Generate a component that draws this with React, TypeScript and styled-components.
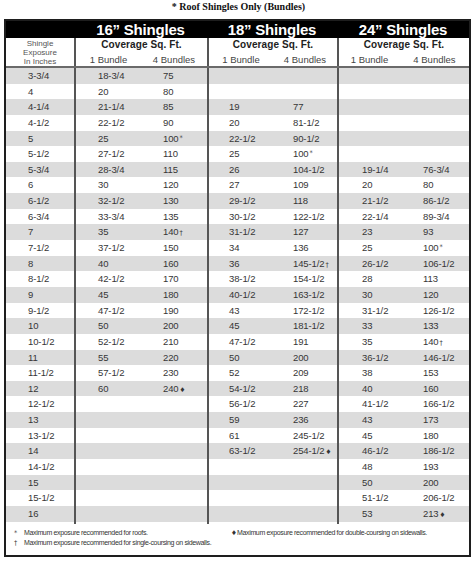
import styled, { createGlobalStyle } from "styled-components";

const GlobalStyle = createGlobalStyle`
  body {
    margin: 0;
    background: #fff;
    font-family: "Liberation Sans", Arial, sans-serif;
  }
`;

type Pair = [string, string];

const EXPOSURES = [
  "3-3/4", "4", "4-1/4", "4-1/2", "5", "5-1/2", "5-3/4", "6", "6-1/2", "6-3/4",
  "7", "7-1/2", "8", "8-1/2", "9", "9-1/2", "10", "10-1/2", "11", "11-1/2",
  "12", "12-1/2", "13", "13-1/2", "14", "14-1/2", "15", "15-1/2", "16",
];

// each group: index of first exposure row it covers, then its bundle figures
const GROUPS: { title: string; start: number; first: string; pad: number; rows: Pair[] }[] = [
  {
    title: "16” Shingles",
    start: 0,
    first: "65px",
    pad: 22,
    rows: [
      ["18-3/4", "75"], ["20", "80"], ["21-1/4", "85"], ["22-1/2", "90"], ["25", "100*"],
      ["27-1/2", "110"], ["28-3/4", "115"], ["30", "120"], ["32-1/2", "130"], ["33-3/4", "135"],
      ["35", "140†"], ["37-1/2", "150"], ["40", "160"], ["42-1/2", "170"], ["45", "180"],
      ["47-1/2", "190"], ["50", "200"], ["52-1/2", "210"], ["55", "220"], ["57-1/2", "230"],
      ["60", "240♦"],
    ],
  },
  {
    title: "18” Shingles",
    start: 2,
    first: "64px",
    pad: 20,
    rows: [
      ["19", "77"], ["20", "81-1/2"], ["22-1/2", "90-1/2"], ["25", "100*"], ["26", "104-1/2"],
      ["27", "109"], ["29-1/2", "118"], ["30-1/2", "122-1/2"], ["31-1/2", "127"], ["34", "136"],
      ["36", "145-1/2†"], ["38-1/2", "154-1/2"], ["40-1/2", "163-1/2"], ["43", "172-1/2"],
      ["45", "181-1/2"], ["47-1/2", "191"], ["50", "200"], ["52", "209"], ["54-1/2", "218"],
      ["56-1/2", "227"], ["59", "236"], ["61", "245-1/2"], ["63-1/2", "254-1/2♦"],
    ],
  },
  {
    title: "24” Shingles",
    start: 6,
    first: "61px",
    pad: 23,
    rows: [
      ["19-1/4", "76-3/4"], ["20", "80"], ["21-1/2", "86-1/2"], ["22-1/4", "89-3/4"], ["23", "93"],
      ["25", "100*"], ["26-1/2", "106-1/2"], ["28", "113"], ["30", "120"], ["31-1/2", "126-1/2"],
      ["33", "133"], ["35", "140†"], ["36-1/2", "146-1/2"], ["38", "153"], ["40", "160"],
      ["41-1/2", "166-1/2"], ["43", "173"], ["45", "180"], ["46-1/2", "186-1/2"], ["48", "193"],
      ["50", "200"], ["51-1/2", "206-1/2"], ["53", "213♦"],
    ],
  },
];

const Page = styled.div`
  width: 474px;
  height: 564px;
`;

const Title = styled.h1`
  margin: 0;
  height: 19px;
  padding-left: 3px;
  font: bold 10px/14px "Liberation Serif", "Times New Roman", serif;
  text-align: center;
  color: #111;
`;

const Chart = styled.div`
  margin-left: 4px;
  width: 467px;
  box-sizing: border-box;
  border: 2px solid #1e1e1e;
`;

const RowGrid = styled.div`
  display: grid;
  grid-template-columns: 68px 133px 130px 132px;
`;

const HeaderBar = styled(RowGrid)`
  height: 17px;
  background: #000;
  color: #fff;
`;

const GroupTitle = styled.div`
  font: bold 15px/17px "Liberation Sans", Arial, sans-serif;
  letter-spacing: -0.2px;
  text-align: center;
`;

const SubHeader = styled(RowGrid)`
  height: 28px;
  border-bottom: 2px solid #6a6a6a;
`;

const ExposureHead = styled.div`
  padding-top: 1px;
  font-size: 8px;
  line-height: 9px;
  text-align: center;
  color: #555;
`;

const Group = styled.div<{ $first: string }>`
  display: grid;
  grid-template-columns: ${({ $first }) => $first} 1fr;
  border-left: 2px solid #555;
`;

const Coverage = styled.div`
  grid-column: 1 / -1;
  padding-top: 1px;
  font: bold 10px/12px "Liberation Sans", Arial, sans-serif;
  letter-spacing: 0.1px;
  text-align: center;
  color: #222;
`;

const BundleHead = styled.div`
  margin-top: 1px;
  font-size: 9.5px;
  line-height: 13px;
  text-align: center;
  color: #444;
`;

const Row = styled(RowGrid)<{ $shade: boolean }>`
  height: 15.655px;
  background: ${({ $shade }) => ($shade ? "#dcdcdc" : "#fff")};
`;

const Cell = styled.div<{ $pad: number }>`
  padding-left: ${({ $pad }) => $pad}px;
  font-size: 9.5px;
  line-height: 15.655px;
  letter-spacing: -0.1px;
  color: #363636;
  white-space: nowrap;
`;

const Mark = styled.span<{ $raise: boolean }>`
  margin-left: 1px;
  font-family: "DejaVu Sans", sans-serif;
  font-size: 6.5px;
  color: #363636;
  vertical-align: ${({ $raise }) => ($raise ? "2px" : "0")};
`;

const Footer = styled.div`
  display: grid;
  grid-template-columns: 222px 1fr;
  height: 33px;
  box-sizing: border-box;
  padding-top: 6px;
`;

const Notes = styled.div<{ $indent: number }>`
  padding-left: ${({ $indent }) => $indent}px;
`;

const Note = styled.div`
  display: flex;
  font-size: 7px;
  line-height: 10px;
  letter-spacing: -0.35px;
  color: #333;
  white-space: nowrap;
`;

const NoteMark = styled.span<{ $w: number }>`
  width: ${({ $w }) => $w}px;
  flex-shrink: 0;
  font-family: "DejaVu Sans", sans-serif;
  font-size: 6.5px;
  color: #333;
`;

const Figure = ({ value, pad }: { value?: string; pad: number }) => {
  if (!value) return <Cell $pad={pad} />;
  const m = value.match(/^(.*?)([*†♦])$/);
  if (!m) return <Cell $pad={pad}>{value}</Cell>;
  return (
    <Cell $pad={pad}>
      {m[1]}
      <Mark $raise={m[2] === "*"}>{m[2]}</Mark>
    </Cell>
  );
};

export default function App() {
  return (
    <Page>
      <GlobalStyle />
      <Title>* Roof Shingles Only (Bundles)</Title>
      <Chart>
        <HeaderBar>
          <div />
          {GROUPS.map((g) => (
            <GroupTitle key={g.title}>{g.title}</GroupTitle>
          ))}
        </HeaderBar>
        <SubHeader>
          <ExposureHead>
            Shingle
            <br />
            Exposure
            <br />
            In Inches
          </ExposureHead>
          {GROUPS.map((g) => (
            <Group key={g.title} $first={g.first}>
              <Coverage>Coverage Sq. Ft.</Coverage>
              <BundleHead>1 Bundle</BundleHead>
              <BundleHead>4 Bundles</BundleHead>
            </Group>
          ))}
        </SubHeader>
        {EXPOSURES.map((exp, i) => (
          <Row key={exp} $shade={i % 2 === 0}>
            <Cell $pad={22}>{exp}</Cell>
            {GROUPS.map((g) => {
              const pair = g.rows[i - g.start];
              return (
                <Group key={g.title} $first={g.first}>
                  <Figure value={pair?.[0]} pad={g.pad} />
                  <Figure value={pair?.[1]} pad={g.pad} />
                </Group>
              );
            })}
          </Row>
        ))}
        <Footer>
          <Notes $indent={8}>
            <Note>
              <NoteMark $w={10}>*</NoteMark>
              Maximum exposure recommended for roofs.
            </Note>
            <Note>
              <NoteMark $w={10}>†</NoteMark>
              Maximum exposure recommended for single-coursing on sidewalls.
            </Note>
          </Notes>
          <Notes $indent={3}>
            <Note>
              <NoteMark $w={6}>♦</NoteMark>
              Maximum exposure recommended for double-coursing on sidewalls.
            </Note>
          </Notes>
        </Footer>
      </Chart>
    </Page>
  );
}
